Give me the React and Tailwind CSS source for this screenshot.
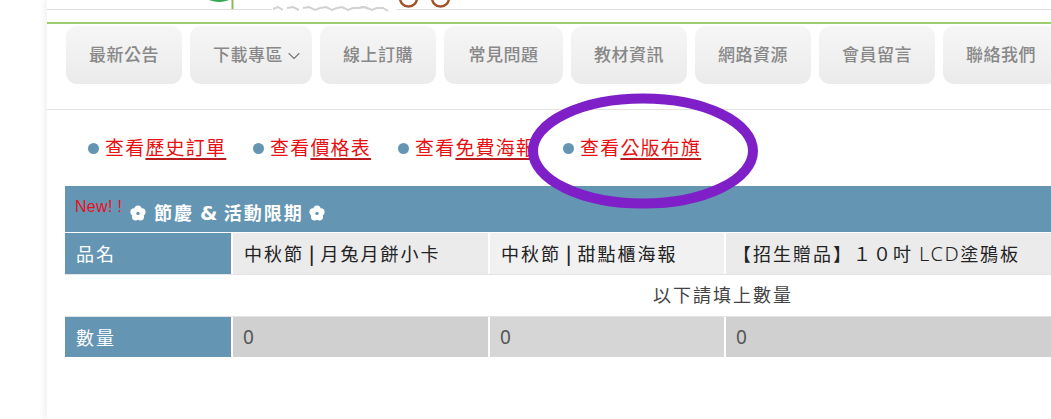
import React from 'react'
import { ChevronDown } from 'lucide-react'

const CJK = 'font-["Noto_Sans_CJK_TC","Liberation_Sans",sans-serif]'
const THIN = 'font-["Noto_Sans",sans-serif] font-normal text-[19px] tracking-normal text-[#555555]'

const navItems = [
    { label: '最新公告', w: 'w-[116px]' },
    { label: '下載專區', w: 'w-[122px]', caret: true },
    { label: '線上訂購', w: 'w-[116px]' },
    { label: '常見問題', w: 'w-[119px]' },
    { label: '教材資訊', w: 'w-[116px]' },
    { label: '網路資源', w: 'w-[116px]' },
    { label: '會員留言', w: 'w-[116px]' },
    { label: '聯絡我們', w: 'w-[116px]' },
]

const links = [
    { pre: '查看', main: '歷史訂單', w: 'w-[165px]' },
    { pre: '查看', main: '價格表', w: 'w-[145px]' },
    { pre: '查看', main: '免費海報', w: 'w-[165px]' },
    { pre: '查看', main: '公版布旗', w: 'w-[140px]' },
]

const HeaderArt = () => (
    <svg className="absolute left-0 top-0" width="420" height="14" viewBox="47 0 420 14" fill="none">
        <ellipse cx="219" cy="-3" rx="12" ry="5" fill="#2fa84f" />
        <path d="M232.5 0V9" stroke="#8cb95a" strokeWidth="2" />
        <rect x="272" y="8" width="125" height="4" fill="white" />
        <path
            d="M273 9l5-2 5 3M287 8l6-1 6 3M303 8l6-1 6 3 5-2 6-1 6 3 5-2 5-1 6 3 5-2 6 0 5-1 5 2M359 8l6-1 7 3 5-2 6 0 5 3"
            stroke="#d2d2d2"
            strokeWidth="2"
        />
        <circle cx="408.5" cy="-2" r="8.5" stroke="#a0562a" strokeWidth="2.5" />
        <circle cx="440.5" cy="-2" r="8.5" stroke="#a0562a" strokeWidth="2.5" />
    </svg>
)

const Flower = () => (
    <svg width="16" height="16" viewBox="0 0 16 16" className="shrink-0">
        <g fill="white">
            <circle cx="8" cy="4" r="3.6" />
            <circle cx="12" cy="6.9" r="3.6" />
            <circle cx="10.5" cy="11.8" r="3.6" />
            <circle cx="5.5" cy="11.8" r="3.6" />
            <circle cx="4" cy="6.9" r="3.6" />
        </g>
        <circle cx="8" cy="8.4" r="1.7" fill="#6495b3" />
    </svg>
)

const Bar = () => <span className="tracking-[1px] font-bold"> | </span>

const App = () => {
    return (
        <div className={`relative w-[1051px] h-[419px] overflow-hidden bg-white ${CJK}`}>
            <div className="ml-[47px] h-full shadow-[-3px_0_6px_rgba(0,0,0,0.06)] relative">
                {/* Top of the logo, cut off by the window */}
                <div className="relative h-[24px] border-b-2 border-[#9ccb72]">
                    <div className="absolute left-0 right-0 top-[9px] h-[1px] bg-[#dddddd]"></div>
                    <HeaderArt />
                </div>

                {/* Nav */}
                <div className="flex gap-2 pl-[19px] pt-[2px] h-[86px] border-b border-[#e3e3e3] w-[1100px]">
                    {navItems.map((item) => (
                        <div
                            key={item.label}
                            className={`${item.w} h-[58px] pb-[2px] shrink-0 flex items-center ${item.caret ? 'pl-[23px]' : 'justify-center'} rounded-[11px] bg-gradient-to-b from-[#f6f6f6] to-[#ebebeb] text-[#888888] text-[17px] tracking-[0.5px] font-medium`}
                        >
                            {item.label}
                            {item.caret && <ChevronDown size={20} strokeWidth={1.3} className="ml-[1px] mt-[3px] text-[#777777]" />}
                        </div>
                    ))}
                </div>

                {/* Links */}
                <div className="flex items-center pl-[41px] h-[76px] pb-[2px]">
                    {links.map((link) => (
                        <div key={link.main} className={`${link.w} shrink-0 flex items-center`}>
                            <span className="w-[11px] h-[11px] rounded-full bg-[#6495b3] mr-[6px] mt-[2px]"></span>
                            <span className="text-[19px] leading-[24px] tracking-[1.2px] text-[#e81010] whitespace-nowrap">
                                {link.pre}
                                <span className="underline decoration-[#b81c1c] decoration-2 underline-offset-[3px]">{link.main}</span>
                            </span>
                        </div>
                    ))}
                </div>

                {/* Table, wider than the window */}
                <div className="ml-[18px] w-[1316px] text-[18px] tracking-[2px]">
                    <div className="relative h-[46px] bg-[#6495b3] flex items-center pl-[65px] pt-[8px] text-white font-bold text-[18px] tracking-[2px] whitespace-nowrap">
                        <span className="absolute left-[10px] top-[9px] font-['Liberation_Sans'] font-normal text-[16px] tracking-[0.3px] text-[#e8101a]">New! !</span>
                        <Flower />
                        <span className="ml-[8px] mr-[5px]">節慶 <span className="font-['DejaVu_Sans'] text-[20px] tracking-normal">&amp;</span> 活動限期</span>
                        <Flower />
                    </div>

                    <div className="flex gap-[2px] h-[43px] pt-[1px] border-b border-[#e3e3e3] text-[#222222] whitespace-nowrap">
                        <div className="w-[166px] shrink-0 bg-[#6495b3] text-white flex items-center pl-[11px]">品名</div>
                        <div className="w-[255px] shrink-0 bg-[#ebebeb] flex items-center pl-[11px] whitespace-pre">中秋節<Bar />月兔月餅小卡</div>
                        <div className="w-[234px] shrink-0 bg-[#f1f1f1] flex items-center pl-[11px] whitespace-pre">中秋節<Bar />甜點櫃海報</div>
                        <div className="flex-1 bg-[#ebebeb] flex items-center pl-[7px]">
                            【招生贈品】１０吋&nbsp;<span className="tracking-[1.5px] text-[20px] font-['Noto_Sans'] font-light">LCD</span>塗鴉板
                        </div>
                    </div>

                    <div className="h-[41px] pb-[2px] flex items-center justify-center text-[#444444]">以下請填上數量</div>

                    <div className="flex gap-[2px] h-[41px] border-t border-[#e3e3e3]">
                        <div className="w-[166px] shrink-0 bg-[#6495b3] text-white flex items-center pl-[11px]">數量</div>
                        <div className={`w-[255px] shrink-0 bg-[#d0d0d0] flex items-center pl-[10px] ${THIN}`}>0</div>
                        <div className={`w-[234px] shrink-0 bg-[#d6d6d6] flex items-center pl-[10px] ${THIN}`}>0</div>
                        <div className={`flex-1 bg-[#d0d0d0] flex items-center pl-[10px] ${THIN}`}>0</div>
                    </div>
                </div>
            </div>

            {/* Hand-drawn highlight over the page */}
            <svg className="absolute left-0 top-0 pointer-events-none" width="1051" height="419" fill="none">
                <ellipse cx="643" cy="151" rx="110" ry="52.5" stroke="#7e1fc8" strokeWidth="10" />
            </svg>
        </div>
    )
}

export default App
